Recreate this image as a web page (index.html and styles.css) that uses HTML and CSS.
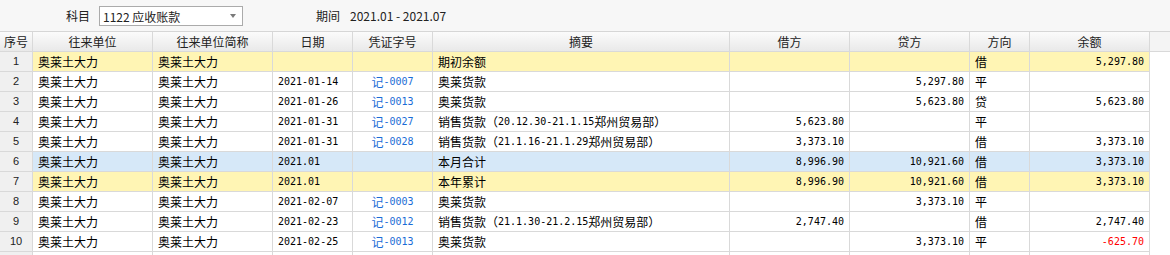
FILE: index.html
```html
<!DOCTYPE html>
<html lang="zh-CN">
<head>
<meta charset="utf-8">
<title>往来明细账</title>
<link rel="stylesheet" href="styles.css">
</head>
<body>
<div class="toolbar">
  <span class="lbl">科目</span>
  <div class="select"><span>1122 应收账款</span><span class="caret"></span></div>
  <span class="lbl period-lbl">期间</span>
  <span class="period">2021.01 - 2021.07</span>
</div>
<div class="grid">
  <div class="row head">
    <div class="c w-seq">序号</div>
    <div class="c w-unit">往来单位</div>
    <div class="c w-unit">往来单位简称</div>
    <div class="c w-date">日期</div>
    <div class="c w-vch">凭证字号</div>
    <div class="c w-sum">摘要</div>
    <div class="c w-amt">借方</div>
    <div class="c w-amt">贷方</div>
    <div class="c w-dir">方向</div>
    <div class="c w-amt">余额</div>
  </div>

  <div class="row yellow">
    <div class="c w-seq seq">1</div>
    <div class="c w-unit">奥莱土大力</div>
    <div class="c w-unit">奥莱土大力</div>
    <div class="c w-date"></div>
    <div class="c w-vch"></div>
    <div class="c w-sum">期初余额</div>
    <div class="c w-amt r"></div>
    <div class="c w-amt r"></div>
    <div class="c w-dir">借</div>
    <div class="c w-amt r"><span class="m">5,297.80</span></div>
  </div>

  <div class="row">
    <div class="c w-seq seq">2</div>
    <div class="c w-unit">奥莱土大力</div>
    <div class="c w-unit">奥莱土大力</div>
    <div class="c w-date"><span class="m">2021-01-14</span></div>
    <div class="c w-vch vch">记<span class="m">-0007</span></div>
    <div class="c w-sum">奥莱货款</div>
    <div class="c w-amt r"></div>
    <div class="c w-amt r"><span class="m">5,297.80</span></div>
    <div class="c w-dir">平</div>
    <div class="c w-amt r"></div>
  </div>

  <div class="row">
    <div class="c w-seq seq">3</div>
    <div class="c w-unit">奥莱土大力</div>
    <div class="c w-unit">奥莱土大力</div>
    <div class="c w-date"><span class="m">2021-01-26</span></div>
    <div class="c w-vch vch">记<span class="m">-0013</span></div>
    <div class="c w-sum">奥莱货款</div>
    <div class="c w-amt r"></div>
    <div class="c w-amt r"><span class="m">5,623.80</span></div>
    <div class="c w-dir">贷</div>
    <div class="c w-amt r"><span class="m">5,623.80</span></div>
  </div>

  <div class="row">
    <div class="c w-seq seq">4</div>
    <div class="c w-unit">奥莱土大力</div>
    <div class="c w-unit">奥莱土大力</div>
    <div class="c w-date"><span class="m">2021-01-31</span></div>
    <div class="c w-vch vch">记<span class="m">-0027</span></div>
    <div class="c w-sum">销售货款（<span class="m">20.12.30-21.1.15</span>郑州贸易部）</div>
    <div class="c w-amt r"><span class="m">5,623.80</span></div>
    <div class="c w-amt r"></div>
    <div class="c w-dir">平</div>
    <div class="c w-amt r"></div>
  </div>

  <div class="row">
    <div class="c w-seq seq">5</div>
    <div class="c w-unit">奥莱土大力</div>
    <div class="c w-unit">奥莱土大力</div>
    <div class="c w-date"><span class="m">2021-01-31</span></div>
    <div class="c w-vch vch">记<span class="m">-0028</span></div>
    <div class="c w-sum">销售货款（<span class="m">21.1.16-21.1.29</span>郑州贸易部）</div>
    <div class="c w-amt r"><span class="m">3,373.10</span></div>
    <div class="c w-amt r"></div>
    <div class="c w-dir">借</div>
    <div class="c w-amt r"><span class="m">3,373.10</span></div>
  </div>

  <div class="row blue">
    <div class="c w-seq seq">6</div>
    <div class="c w-unit">奥莱土大力</div>
    <div class="c w-unit">奥莱土大力</div>
    <div class="c w-date"><span class="m">2021.01</span></div>
    <div class="c w-vch"></div>
    <div class="c w-sum">本月合计</div>
    <div class="c w-amt r"><span class="m">8,996.90</span></div>
    <div class="c w-amt r"><span class="m">10,921.60</span></div>
    <div class="c w-dir">借</div>
    <div class="c w-amt r"><span class="m">3,373.10</span></div>
  </div>

  <div class="row yellow">
    <div class="c w-seq seq">7</div>
    <div class="c w-unit">奥莱土大力</div>
    <div class="c w-unit">奥莱土大力</div>
    <div class="c w-date"><span class="m">2021.01</span></div>
    <div class="c w-vch"></div>
    <div class="c w-sum">本年累计</div>
    <div class="c w-amt r"><span class="m">8,996.90</span></div>
    <div class="c w-amt r"><span class="m">10,921.60</span></div>
    <div class="c w-dir">借</div>
    <div class="c w-amt r"><span class="m">3,373.10</span></div>
  </div>

  <div class="row">
    <div class="c w-seq seq">8</div>
    <div class="c w-unit">奥莱土大力</div>
    <div class="c w-unit">奥莱土大力</div>
    <div class="c w-date"><span class="m">2021-02-07</span></div>
    <div class="c w-vch vch">记<span class="m">-0003</span></div>
    <div class="c w-sum">奥莱货款</div>
    <div class="c w-amt r"></div>
    <div class="c w-amt r"><span class="m">3,373.10</span></div>
    <div class="c w-dir">平</div>
    <div class="c w-amt r"></div>
  </div>

  <div class="row">
    <div class="c w-seq seq">9</div>
    <div class="c w-unit">奥莱土大力</div>
    <div class="c w-unit">奥莱土大力</div>
    <div class="c w-date"><span class="m">2021-02-23</span></div>
    <div class="c w-vch vch">记<span class="m">-0012</span></div>
    <div class="c w-sum">销售货款（<span class="m">21.1.30-21.2.15</span>郑州贸易部）</div>
    <div class="c w-amt r"><span class="m">2,747.40</span></div>
    <div class="c w-amt r"></div>
    <div class="c w-dir">借</div>
    <div class="c w-amt r"><span class="m">2,747.40</span></div>
  </div>

  <div class="row">
    <div class="c w-seq seq">10</div>
    <div class="c w-unit">奥莱土大力</div>
    <div class="c w-unit">奥莱土大力</div>
    <div class="c w-date"><span class="m">2021-02-25</span></div>
    <div class="c w-vch vch">记<span class="m">-0013</span></div>
    <div class="c w-sum">奥莱货款</div>
    <div class="c w-amt r"></div>
    <div class="c w-amt r"><span class="m">3,373.10</span></div>
    <div class="c w-dir">平</div>
    <div class="c w-amt r neg"><span class="m">-625.70</span></div>
  </div>

  <div class="row last">
    <div class="c w-seq seq"></div>
    <div class="c w-unit"></div>
    <div class="c w-unit"></div>
    <div class="c w-date"></div>
    <div class="c w-vch"></div>
    <div class="c w-sum"></div>
    <div class="c w-amt"></div>
    <div class="c w-amt"></div>
    <div class="c w-dir"></div>
    <div class="c w-amt"></div>
  </div>
</div>
</body>
</html>
```

FILE: styles.css
```css
html, body {
  margin: 0;
  padding: 0;
  background: #ffffff;
  overflow: hidden;
}
body {
  font-family: "Noto Sans CJK SC", "Liberation Sans", sans-serif;
  font-size: 12px;
  color: #000;
  height: 255px;
}

.toolbar {
  height: 31px;
  background: #f7f7f7;
  display: flex;
  align-items: center;
  padding-left: 66px;
  box-sizing: border-box;
  color: #222;
}
.lbl {
  font-size: 12px;
  line-height: 1;
}
.select {
  margin-left: 9px;
  width: 144px;
  height: 20px;
  box-sizing: border-box;
  border: 1px solid #ababab;
  background: #fff;
  display: flex;
  align-items: center;
  justify-content: space-between;
  padding: 0 6px 0 3px;
  font-size: 12px;
  margin-top: 1px;
}
.caret {
  width: 0;
  height: 0;
  border-left: 3.5px solid transparent;
  border-right: 3.5px solid transparent;
  border-top: 4px solid #7a7a7a;
}
.period-lbl {
  margin-left: 73px;
}
.period {
  margin-left: 10px;
  font-size: 12px;
}

.grid {
  width: 1170px;
}
.row {
  display: flex;
  height: 20px;
  width: 1150px;
  box-sizing: border-box;
  border-bottom: 1px solid #d9d9d9;
}
.row.last {
  height: 3px;
  border-bottom: none;
  overflow: hidden;
}
.row.head {
  height: 21px;
  width: 1170px;
  border-top: 1px solid #d6d6d6;
  background: #f4f4f4;
}
.c {
  box-sizing: border-box;
  border-right: 1px solid #d9d9d9;
  padding: 0 5px;
  display: flex;
  align-items: center;
  white-space: nowrap;
  overflow: hidden;
  flex: none;
  line-height: 1;
}
.head .c {
  justify-content: center;
  background: linear-gradient(#fbfbfb, #e9e9e9);
  color: #222;
  font-size: 12px;
  padding: 0;
}

.w-seq { width: 33px; }
.w-unit { width: 120px; }
.w-date { width: 80px; }
.w-vch { width: 80px; }
.w-sum { width: 297px; }
.w-amt { width: 120px; }
.w-dir { width: 60px; }

.seq {
  background: #f0f0f0;
  justify-content: center;
  padding: 0;
  font-family: "Liberation Sans", sans-serif;
  font-size: 11px;
  color: #222;
}
.r {
  justify-content: flex-end;
  padding-right: 5px;
}
.vch {
  justify-content: center;
  color: #1a6cd6;
}
.neg {
  color: #ff0000;
}
.m {
  font-family: "DejaVu Sans Mono", monospace;
  font-size: 10px;
  color: inherit;
}

.yellow .c:not(.seq) { background: #fff5b4; }
.blue .c:not(.seq) { background: #d6e8f8; }
```
